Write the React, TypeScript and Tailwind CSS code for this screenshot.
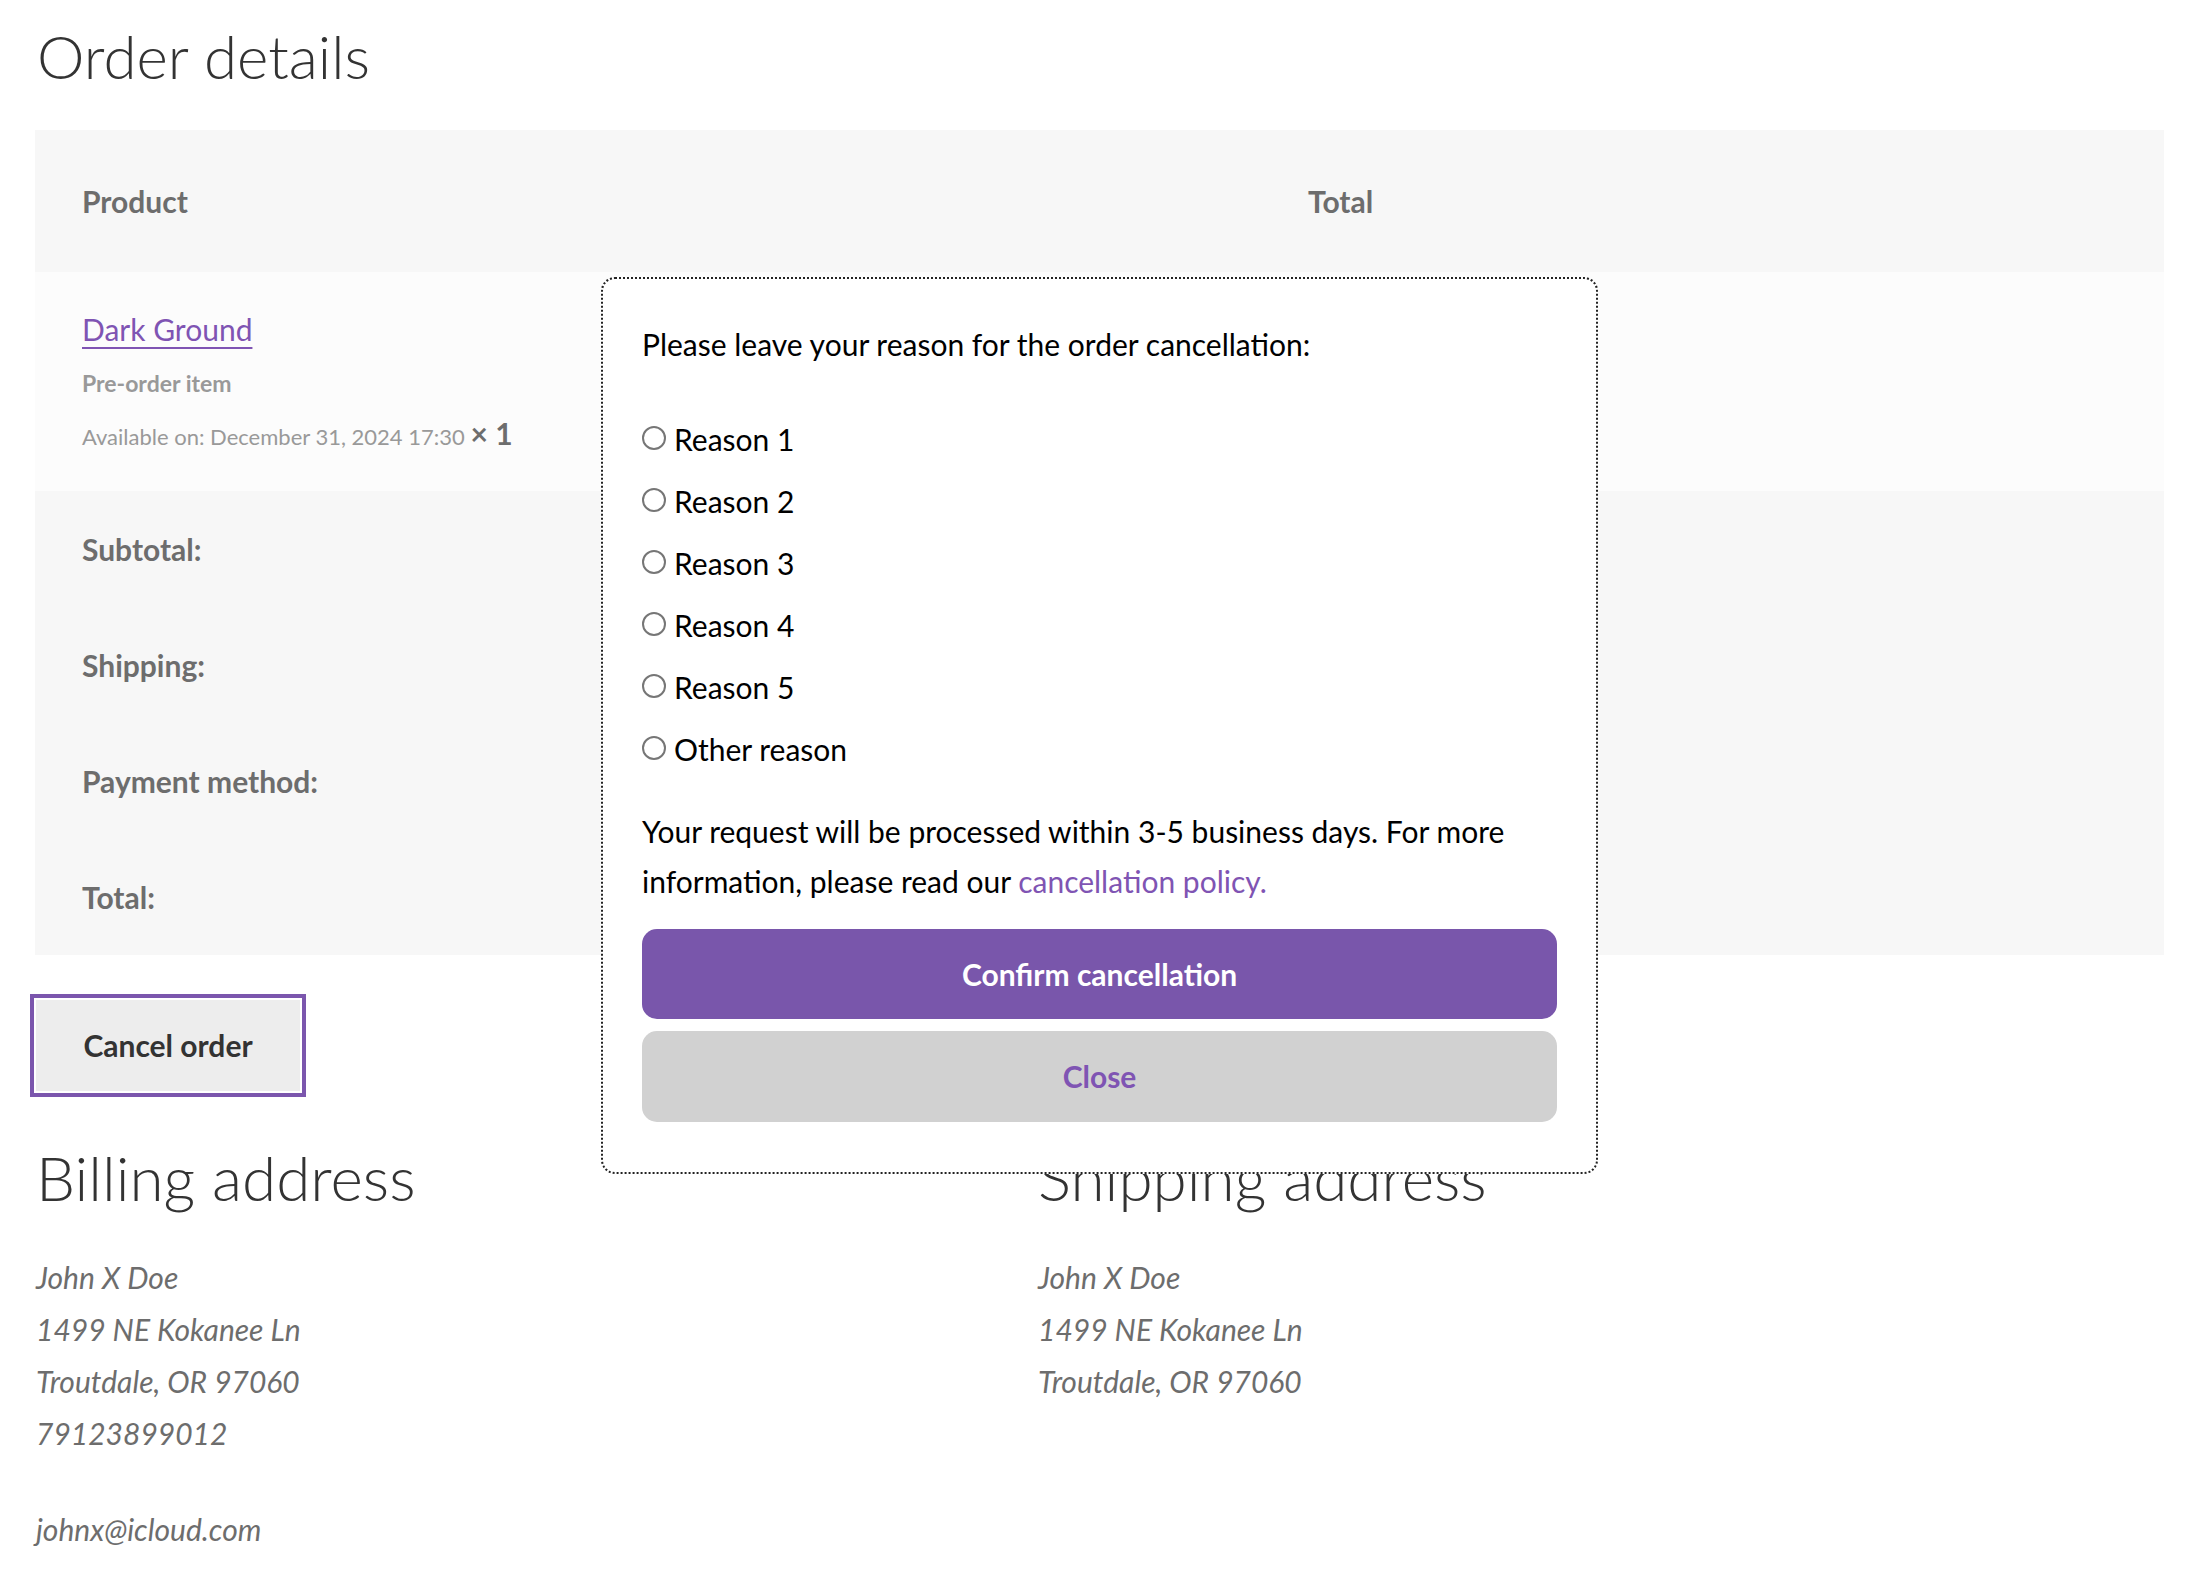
import React from "react";

const reasons = ["Reason 1", "Reason 2", "Reason 3", "Reason 4", "Reason 5", "Other reason"];
const totals = ["Subtotal:", "Shipping:", "Payment method:", "Total:"];

const Address: React.FC<{ title: string; lines: string[]; email?: string }> = ({ title, lines, email }) => {
  return (
    <div>
      <h2 className="text-[62px] font-light leading-[74px] text-[#333]">{title}</h2>
      <address className="mt-[37px] not-italic">
        {lines.map((line) => (
          <div key={line} className="text-[30px] italic leading-[52px] text-[#6d6d6d]">
            {line}
          </div>
        ))}
      </address>
      {email && <div className="mt-[44px] text-[30px] italic leading-[52px] text-[#6d6d6d]">{email}</div>}
    </div>
  );
};

const CancelModal: React.FC = () => {
  return (
    <div className="absolute left-[601px] top-[277px] w-[997px] rounded-[14px] border-2 border-dotted border-[#222] bg-white px-[39px] pt-[40px] pb-[50px] text-black">
      <p className="text-[30px] leading-[50px]">Please leave your reason for the order cancellation:</p>
      <div className="mt-[39px] flex flex-col">
        {reasons.map((reason) => (
          <label key={reason} className="flex h-[62px] items-center gap-[8px] text-[30px]">
            <span className="h-[24px] w-[24px] shrink-0 rounded-full border-2 border-[#767676] bg-white -translate-y-[1px]" />
            <span>{reason}</span>
          </label>
        ))}
      </div>
      <p className="mt-[26px] text-[30px] leading-[50px]">
        <span className="block whitespace-nowrap">Your request will be processed within 3-5 business days. For more</span>
        <span className="block whitespace-nowrap">
          information, please read our <a className="text-[#7f54b3]">cancellation policy.</a>
        </span>
      </p>
      <button className="mt-[23px] flex h-[90px] w-full items-center justify-center rounded-[15px] bg-[#7956ab] text-[30px] font-bold text-white">
        Confirm cancellation
      </button>
      <button className="mt-[12px] flex h-[91px] w-full items-center justify-center rounded-[15px] bg-[#d1d1d1] text-[30px] font-bold text-[#7f54b3]">
        Close
      </button>
    </div>
  );
};

export default function App() {
  return (
    <div className="relative min-h-[1592px] w-[2208px] bg-white font-['Lato',sans-serif]">
      <div className="pl-[35px] pr-[44px] pt-[19px]">
        <h1 className="pl-[2px] text-[60px] font-light leading-[74px] text-[#333]">Order details</h1>

        <div className="mt-[37px] w-[2129px]">
          <div className="grid h-[142px] grid-cols-[1226px_1fr] items-center bg-[#f7f7f7] text-[30px] font-bold text-[#6d6d6d]">
            <div className="pl-[47px]">Product</div>
            <div className="pl-[47px]">Total</div>
          </div>
          <div className="h-[219px] bg-[#fcfcfc] pl-[47px] pt-[32px]">
            <a className="text-[30px] leading-[50px] text-[#7f54b3] underline decoration-2 underline-offset-[6px]">Dark Ground</a>
            <div className="mt-[11px] text-[23px] font-bold leading-[36px] text-[#999]">Pre-order item</div>
            <div className="mt-[14px] text-[22px] leading-[36px] text-[#999]">
              Available on: December 31, 2024 17:30{" "}
              <strong className="text-[30px] font-bold text-[#6d6d6d]">×&nbsp;1</strong>
            </div>
          </div>
          <div className="bg-[#f7f7f7]">
            {totals.map((label) => (
              <div key={label} className="flex h-[116px] items-center pl-[47px] text-[30px] font-bold text-[#6d6d6d]">
                {label}
              </div>
            ))}
          </div>
        </div>

        <button className="ml-[1px] mt-[45px] flex h-[91px] w-[264px] items-center justify-center bg-[#ededed] text-[30px] font-bold text-[#333] outline-4 outline-offset-2 outline-[#7b56ad]">
          Cancel order
        </button>

        <div className="mt-[49px] grid grid-cols-[1002px_1fr] pl-[1px]">
          <Address
            title="Billing address"
            lines={["John X Doe", "1499 NE Kokanee Ln", "Troutdale, OR 97060", "79123899012"]}
            email="johnx@icloud.com"
          />
          <Address title="Shipping address" lines={["John X Doe", "1499 NE Kokanee Ln", "Troutdale, OR 97060"]} />
        </div>
      </div>

      <CancelModal />
    </div>
  );
}
